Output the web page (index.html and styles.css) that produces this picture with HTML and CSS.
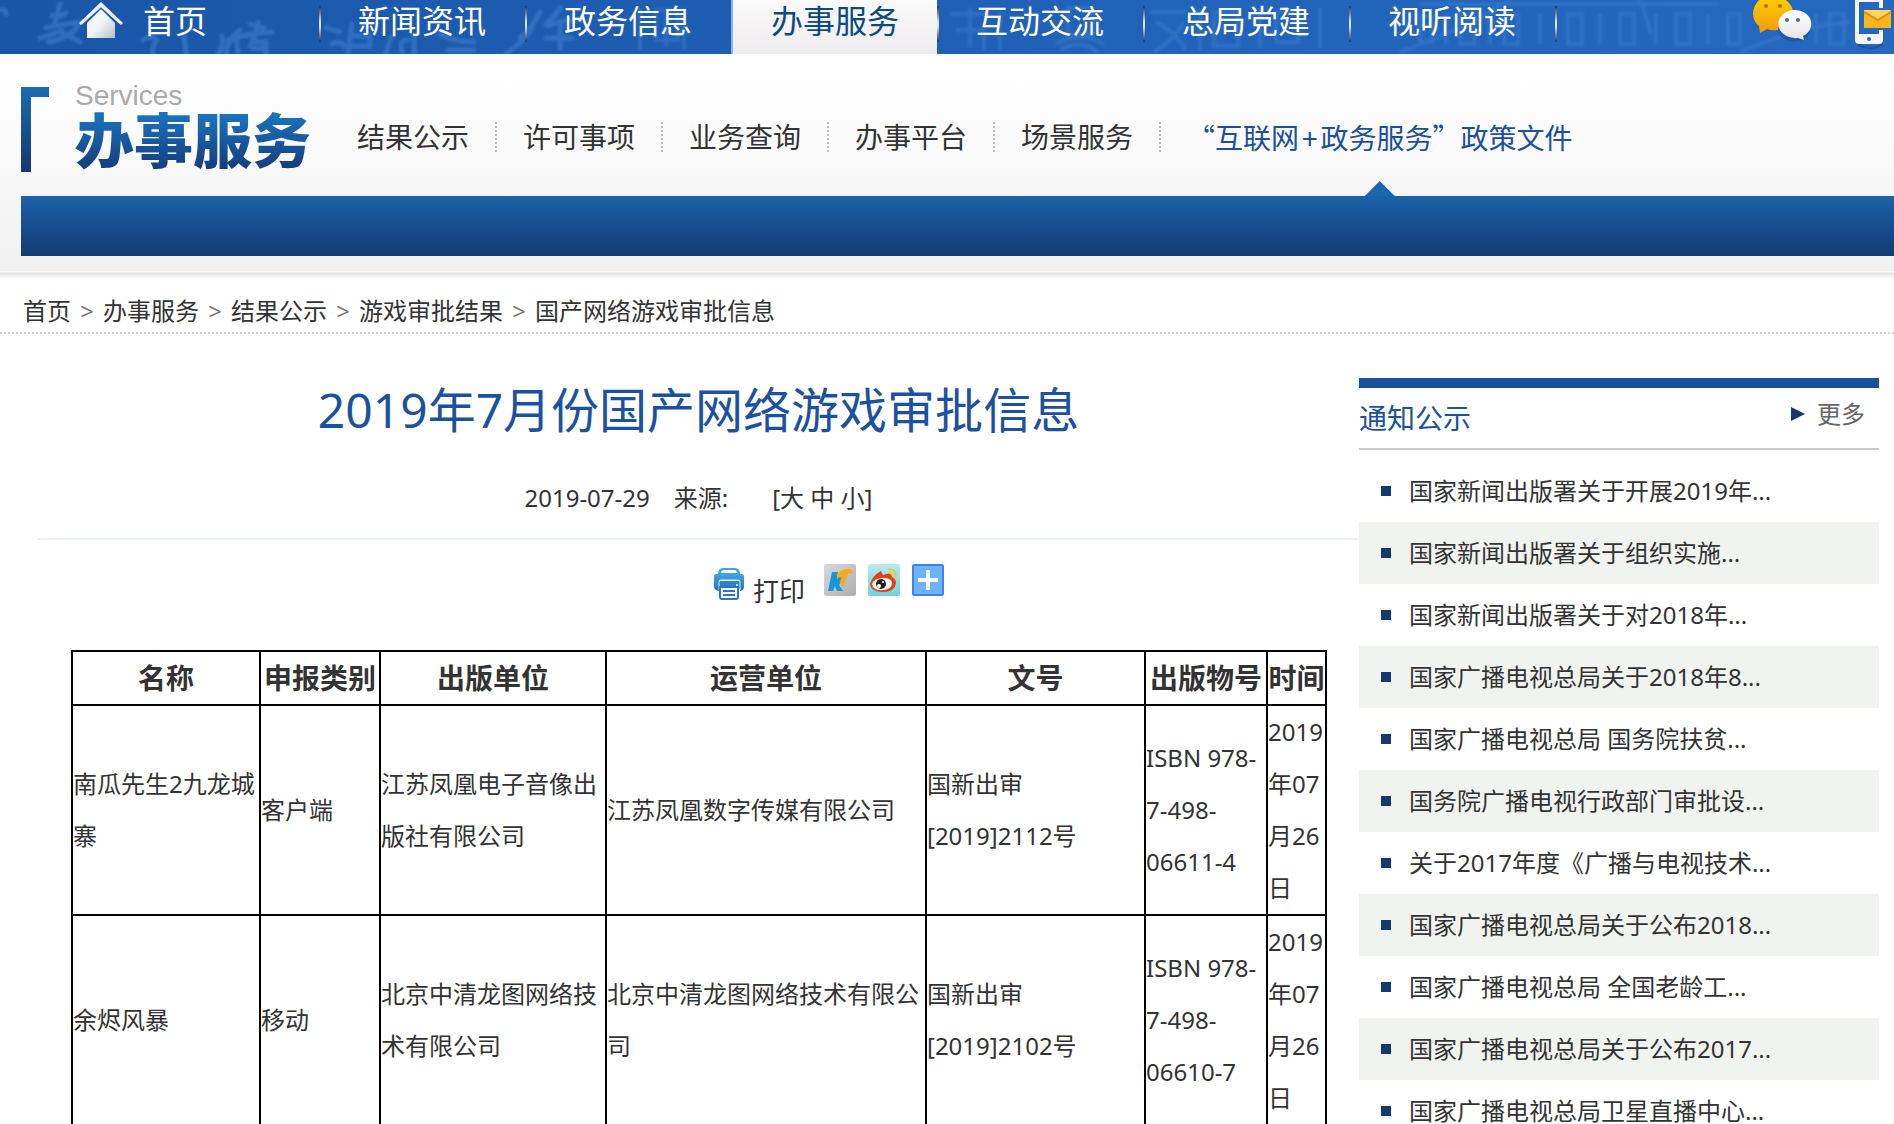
FILE: index.html
```html
<!DOCTYPE html>
<html lang="zh-CN">
<head>
<meta charset="utf-8">
<title>2019年7月份国产网络游戏审批信息</title>
<link rel="stylesheet" href="styles.css">
</head>
<body>
<nav class="mainnav">
  <svg class="mainnav-texture" width="1894" height="54" aria-hidden="true">
    <g class="brush">
      <path d="M0 10q6-2 6 4M40 38q12-3 22-8M52 15q8 3 14-2M60 4l-6 22M46 28q16-4 36-6M60 32q10 4 20 10M78 26q-8 12-30 16"/>
      <path d="M143 40q8-6 14 0q-6 8-4 14M184 36l2 18M222 36q2 10-4 18M240 30q-12 8-14 24M228 40l22-6M236 36l2 16M250 24l14 4M246 36q14-4 26-4M258 22q-2 14-8 24M252 42h14v12M252 48h12"/>
      <path d="M326 28l14 4M332 44q8-4 12 2M352 24l-4 28M352 36h18v10h-18M392 36q-4 8-6 18M408 40q-10 0-6 12M414 36v18M440 34q14 8 34 8M448 50h26"/>
      <path d="M540 12q-8 16-20 26M532 28q-6 12-26 26M560 8q-6 10-14 16M548 26q20-8 34-6M560 24v24M546 38h26"/>
    </g>
    <g class="seal">
      <path d="M640 8v42M656 10h22v30h-22zM684 8v42M666 14v32M760 10h24v34h-24zM772 6v42M950 14h40M970 8v40M956 30h28v20M1000 12v38M1056 44q22-14 48 0M1060 50q20-12 38 2M1068 8h24v26h-24zM1150 12h36M1156 22q20 10 30 28M1184 22q-12 20-30 30M1200 10v40M1214 12h24v34h-24z"/>
      <path d="M1260 8v40M1276 12h22v30h-22zM1320 8v40M1420 16h12v26h-12zM1446 14v30M1460 14h14v30h-14zM1490 14v30M1504 14h14v30h-14zM1540 14v30M1568 14h14v30h-14zM1600 14v30M1620 14h14v30h-14zM1656 14v30M1676 14h14v30h-14zM1708 14v30M1728 14h12v30h-12zM1816 14v30M1830 14h14v30h-14zM1420 4h300M1400 52q80-30 110-52M1740 52q60-26 110-30M1640 0q10 26 10 34"/>
    </g>
  </svg>
  <a class="home" href="#">
    <svg width="44" height="36" viewBox="0 0 44 36" aria-hidden="true">
      <defs><linearGradient id="roof" x1="0" y1="0" x2="1" y2="1"><stop offset="0" stop-color="#fff"/><stop offset=".5" stop-color="#f2f4f7"/><stop offset="1" stop-color="#b9bec6"/></linearGradient></defs>
      <path d="M8 21L22 7l14 14v15H8z" fill="url(#roof)"/>
      <path d="M22 5L3 22" stroke="#8fa9cf" stroke-width="1"/>
      <path d="M22 5l19 17" stroke="#8fa9cf" stroke-width="1"/>
      <path d="M22 0L0 21l2 2L22 5l20 18 2-2z" fill="#eef2f8"/>
    </svg>
    <span>首页</span>
  </a>
  <a class="tab" href="#">新闻资讯</a>
  <a class="tab" href="#">政务信息</a>
  <a class="tab tab-active" href="#">办事服务</a>
  <a class="tab" href="#">互动交流</a>
  <a class="tab" href="#">总局党建</a>
  <a class="tab" href="#">视听阅读</a>
  <div class="contact">
    <a href="#" aria-label="微信">
      <svg width="62" height="54" viewBox="0 0 62 54">
        <defs>
          <linearGradient id="gold" x1="0" y1="0" x2="0" y2="1"><stop offset="0" stop-color="#ffd000"/><stop offset="1" stop-color="#f59a0c"/></linearGradient>
          <linearGradient id="pearl" x1="0" y1="0" x2="0" y2="1"><stop offset="0" stop-color="#fff"/><stop offset="1" stop-color="#e4e4e6"/></linearGradient>
        </defs>
        <ellipse cx="42" cy="27" rx="17" ry="15" fill="#123f80" opacity=".4"/>
        <path d="M7 26C-1 20-1 8 7 0Q20-10 34 0Q41 6 41 12Q28 16 26 30Q20 31 15 29L8 33z" fill="url(#gold)"/>
        <path d="M41 10a17 14 0 1 0 5 28l6 2-1-4a17 14 0 0 0-10-26z" fill="url(#pearl)"/>
        <g fill="#a77a10"><circle cx="14" cy="6" r="2"/><circle cx="28" cy="6" r="2"/></g>
        <g fill="#3b6ca8"><circle cx="35" cy="20" r="2"/><circle cx="46" cy="20" r="2"/></g>
      </svg>
    </a>
    <a href="#" aria-label="手机客户端">
      <svg width="40" height="54" viewBox="0 0 40 54">
        <path d="M3 42q14 10 26 0v4q-13 6-26 0z" fill="#123f80" opacity=".4"/>
        <path d="M1 0h28v8h-4V2H5v32h20v-4h4v10q0 4-4 4H5q-4 0-4-4z" fill="#f5f6f8"/>
        <circle cx="15" cy="39" r="2" fill="#3b6ca8"/>
        <path d="M10 10h27v18H10z" fill="#fbb61b"/>
        <path d="M10 10h27L24 20z" fill="#ffd65a"/>
        <path d="M10 12l14 8 13-8" fill="none" stroke="#e58c12" stroke-width="2"/>
      </svg>
    </a>
  </div>
</nav>

<header class="section">
  <div class="section-top">
    <div class="brand">
      <svg width="28" height="86" viewBox="0 0 28 86" aria-hidden="true">
        <defs><linearGradient id="bracket" x1="0" y1="0" x2="0" y2="1"><stop offset="0" stop-color="#1b6ab4"/><stop offset="1" stop-color="#14376f"/></linearGradient></defs>
        <path d="M0 0h28v10H10v75H0z" fill="url(#bracket)"/>
      </svg>
      <div class="brand-name">
        <span class="brand-en">Services</span>
        <span class="brand-zh">办事服务</span>
      </div>
    </div>
    <ul class="subnav">
      <li><a href="#">结果公示</a></li>
      <li><a href="#">许可事项</a></li>
      <li><a href="#">业务查询</a></li>
      <li><a href="#">办事平台</a></li>
      <li><a href="#">场景服务</a></li>
      <li class="current"><a href="#">“互联网<span class="plus">+</span>政务服务”政策文件</a></li>
    </ul>
  </div>
  <div class="band"></div>
</header>

<ol class="crumbs">
  <li><a href="#">首页</a></li>
  <li><a href="#">办事服务</a></li>
  <li><a href="#">结果公示</a></li>
  <li><a href="#">游戏审批结果</a></li>
  <li><a href="#">国产网络游戏审批信息</a></li>
</ol>

<div class="columns">
  <main class="article">
    <h1>2019年7月份国产网络游戏审批信息</h1>
    <div class="meta">
      <span>2019-07-29</span>
      <span class="source">来源:</span>
      <span class="sizes">[<a href="#">大</a> <a href="#">中</a> <a href="#">小</a>]</span>
    </div>
    <div class="tools">
      <button class="print" type="button">
        <svg width="32" height="32" viewBox="0 0 32 32" aria-hidden="true">
          <defs><linearGradient id="ink" x1="0" y1="0" x2="0" y2="1"><stop offset="0" stop-color="#3fa6e0"/><stop offset="1" stop-color="#2a6fae"/></linearGradient></defs>
          <path d="M5 6q0-6 5-6h12q5 0 5 6z" fill="#3fa2dc"/>
          <path d="M8 5q0-3 3-3h10q3 0 3 3z" fill="#fff"/>
          <path d="M3 6h26q2 0 2 3v10q0 3-4 4v-9q0-2-2-2H8q-2 0-2 2v9q-5-1-5-4v-10q0-3 2-3z" fill="url(#ink)"/>
          <path d="M6 13h21v8H6z" fill="#2e83c3"/>
          <path d="M6 22v-8q0-2 2-2h17q2 0 2 2v8" fill="none" stroke="#d8effb"/>
          <circle cx="24" cy="17" r="1" fill="#fff"/>
          <path d="M6 18h20v11q0 3-3 3H9q-3 0-3-3z" fill="#2c78b6"/>
          <path d="M8 20h16v9q0 1-1 1H9q-1 0-1-1z" fill="#fff"/>
          <path d="M10 23h12M10 27h12" stroke="#2c78b6" stroke-width="2"/>
        </svg>
        <span>打印</span>
      </button>
      <a href="#" aria-label="人民微博">
        <svg width="32" height="32" viewBox="0 0 32 32">
          <defs><linearGradient id="steel" x1="0" y1="0" x2="1" y2="1"><stop offset="0" stop-color="#d9d9da"/><stop offset="1" stop-color="#adaeb0"/></linearGradient></defs>
          <rect width="32" height="32" rx="2" fill="url(#steel)"/>
          <path d="M8 8h6l-1 7 3-3 3 4-4 5 4 6h-6l-2-5-2 5H4z" fill="#1697dc"/>
          <path d="M13 10q6-6 14-5l2 4-5 1-5 14-3-5 1-6-4 1z" fill="#f9a91b"/>
        </svg>
      </a>
      <a href="#" aria-label="新浪微博">
        <svg width="32" height="32" viewBox="0 0 32 32">
          <defs><linearGradient id="aqua" x1="0" y1="0" x2="0" y2="1"><stop offset="0" stop-color="#b9ebf1"/><stop offset="1" stop-color="#72d2df"/></linearGradient></defs>
          <rect width="32" height="32" rx="2" fill="url(#aqua)"/>
          <path d="M2 20q2-8 11-13l2 4q9-4 9 2 4 2 4 6-1 9-13 9T2 20z" fill="#e93e12"/>
          <path d="M4 20q2-6 11-6t9 5q0 6-9 7-10 1-11-6z" fill="#fff"/>
          <circle cx="13" cy="20" r="5" fill="#222"/><circle cx="11" cy="22" r="2" fill="#fff"/><circle cx="15" cy="18" r="1" fill="#fff"/>
          <path d="M20 5q8-1 8 8M21 9q4 0 4 4" fill="none" stroke="#e0cf3c" stroke-width="2"/>
        </svg>
      </a>
      <a href="#" aria-label="更多分享">
        <svg width="32" height="32" viewBox="0 0 32 32">
          <rect x="1" y="1" width="30" height="30" rx="1" fill="#6fb1fd" stroke="#3c82f6" stroke-width="2"/>
          <path d="M16 6v20M6 16h20" stroke="#fff" stroke-width="4"/>
        </svg>
      </a>
    </div>
    <table class="approvals">
      <colgroup><col class="c-name"><col class="c-type"><col class="c-pub"><col class="c-op"><col class="c-doc"><col class="c-isbn"><col class="c-date"></colgroup>
      <thead>
        <tr><th>名称</th><th>申报类别</th><th>出版单位</th><th>运营单位</th><th>文号</th><th>出版物号</th><th>时间</th></tr>
      </thead>
      <tbody>
        <tr><td>南瓜先生2九龙城寨</td><td>客户端</td><td>江苏凤凰电子音像出版社有限公司</td><td>江苏凤凰数字传媒有限公司</td><td>国新出审[2019]2112号</td><td>ISBN 978-<wbr>7-498-<wbr>06611-4</td><td>2019年07月26日</td></tr>
        <tr><td>余烬风暴</td><td>移动</td><td>北京中清龙图网络技术有限公司</td><td>北京中清龙图网络技术有限公司</td><td>国新出审[2019]2102号</td><td>ISBN 978-<wbr>7-498-<wbr>06610-7</td><td>2019年07月26日</td></tr>
      </tbody>
    </table>
  </main>

  <aside class="notices">
    <div class="notices-head">
      <h2>通知公示</h2>
      <a class="more" href="#">更多</a>
    </div>
    <ul>
      <li><a href="#">国家新闻出版署关于开展2019年...</a></li>
      <li><a href="#">国家新闻出版署关于组织实施...</a></li>
      <li><a href="#">国家新闻出版署关于对2018年...</a></li>
      <li><a href="#">国家广播电视总局关于2018年8...</a></li>
      <li><a href="#">国家广播电视总局 国务院扶贫...</a></li>
      <li><a href="#">国务院广播电视行政部门审批设...</a></li>
      <li><a href="#">关于2017年度《广播与电视技术...</a></li>
      <li><a href="#">国家广播电视总局关于公布2018...</a></li>
      <li><a href="#">国家广播电视总局 全国老龄工...</a></li>
      <li><a href="#">国家广播电视总局关于公布2017...</a></li>
      <li><a href="#">国家广播电视总局卫星直播中心...</a></li>
    </ul>
  </aside>
</div>
</body>
</html>
```
FILE: styles.css
```css
* { box-sizing: border-box; }

body {
  margin: 0;
  background: #fff;
  color: #333;
  font: 24px/52px "Noto Sans", "Noto Sans CJK SC", sans-serif;
}

a { color: inherit; text-decoration: none; }
ul, ol { margin: 0; padding: 0; list-style: none; }
svg { display: block; }

/* top navigation */
.mainnav {
  position: relative;
  display: flex;
  height: 54px;
  overflow: hidden;
  background: linear-gradient(90deg, #1a56a6, #1d5cb0 30%, #2163b9 60%, #2568bf);
  color: #fff;
  font-size: 32px;
  line-height: 42px;
}
.mainnav-texture { position: absolute; inset: 0; fill: none; }
.brush { stroke: #3f7ecd; stroke-width: 5; stroke-linecap: round; opacity: .6; filter: blur(1px); }
.seal { stroke: #3a7dcf; stroke-width: 4; opacity: .5; filter: blur(1px); }
.home, .tab, .contact { position: relative; flex: none; }
.home {
  display: flex;
  gap: 20px;
  width: 319px;
  padding: 0 0 0 79px;
}
.home svg { margin-top: 2px; }
.tab {
  width: 206px;
  text-align: center;
}
.tab, .contact {
  background: linear-gradient(#1c3558, #dfeaf8 45%, #dfeaf8 55%, #1c3558) no-repeat 0 6px / 2px 36px;
}
.tab-active {
  border-left: 2px solid #8fb4e0;
  background: linear-gradient(#fbfafa, #eeecee) padding-box;
  color: #0d4a80;
}
.contact {
  display: flex;
  flex: 1 0 auto;
  justify-content: flex-end;
  gap: 40px;
}

/* section header */
.section {
  height: 225px;
  padding-left: 21px;
  background:
    linear-gradient(#fff, #e4e4e4 30%, #fff) no-repeat 0 100% / 100% 8px,
    linear-gradient(#fff 10%, #f0f0f0);
}
.section-top {
  display: flex;
  align-items: flex-start;
  height: 142px;
}
.brand { display: flex; gap: 26px; width: 310px; padding-top: 33px; }
.brand-name { display: flex; flex-direction: column; gap: 3px; }
.brand-en {
  color: #aaa;
  font: 28px/18px "Liberation Sans", Arial, sans-serif;
}
.brand-zh {
  background: linear-gradient(#1b72be 10%, #153b78 90%);
  background-clip: text;
  color: transparent;
  font-family: "Liberation Sans", "Noto Sans CJK SC", sans-serif;
  font-size: 59px;
  font-weight: 900;
  line-height: 70px;
}
.subnav {
  display: flex;
  padding-top: 68px;
  font-size: 28px;
  line-height: 30px;
  white-space: nowrap;
}
.subnav li {
  width: 166px;
  height: 30px;
  padding-left: 26px;
  border-right: 2px dotted #bbb;
}
.subnav .current {
  position: relative;
  width: auto;
  margin-left: 26px;
  padding: 0;
  border: 0;
  color: #1c4f9c;
  font-family: "Noto Sans CJK SC", sans-serif;
}
.plus { padding: 0 3px; }
.current::after {
  content: "";
  position: absolute;
  left: 50%;
  bottom: -44px;
  width: 30px;
  height: 15px;
  margin-left: -15px;
  background: #1b66af;
  clip-path: polygon(50% 0, 100% 100%, 0 100%);
}
.band { height: 60px; background: linear-gradient(#1a62aa, #15417f 80%, #143c74); }

/* breadcrumb */
.crumbs {
  display: flex;
  height: 55px;
  padding: 6px 23px 0;
  border-bottom: 2px dotted #d4d4d4;
}
.crumbs li + li::before { content: ">"; display: inline-block; width: 32px; color: #777; text-align: center; }

/* content */
.columns {
  display: flex;
  align-items: flex-start;
  padding: 44px 15px 0 38px;
}
.article { flex: 1; min-width: 0; }
.article h1 {
  margin: 0;
  color: #1c51a0;
  font-size: 48px;
  font-weight: 400;
  line-height: 64px;
  text-align: center;
}
.meta {
  display: flex;
  justify-content: center;
  height: 98px;
  margin-bottom: 24px;
  padding-top: 30px;
  border-bottom: 2px solid #eaf1f6;
}
.source { padding: 0 44px 0 24px; }
.tools {
  display: flex;
  justify-content: center;
  gap: 12px;
  height: 86px;
  padding-left: 260px;
}
.print {
  display: flex;
  gap: 8px;
  height: 52px;
  margin-right: 7px;
  padding: 4px 0 0;
  border: 0;
  background: none;
  color: #333;
  font: inherit;
  font-size: 26px;
  line-height: 46px;
}
.approvals {
  width: calc(100% - 65px);
  margin-left: 33px;
  border-collapse: collapse;
  table-layout: fixed;
}
.approvals th, .approvals td { padding: 0; border: 2px solid #000; }
.approvals th { font-size: 28px; white-space: nowrap; }
.c-name { width: 188px; }
.c-type { width: 120px; }
.c-pub { width: 226px; }
.c-op { width: 320px; }
.c-doc { width: 219px; }
.c-isbn { width: 122px; }
.c-date { width: 59px; }

/* notices */
.notices { width: 520px; border-top: 10px solid #1b509c; }
.notices-head {
  display: flex;
  justify-content: space-between;
  height: 62px;
  margin-bottom: 10px;
  padding-right: 14px;
  border-bottom: 2px solid #ccc;
}
.notices h2 {
  margin: 0;
  color: #1c51a0;
  font-size: 28px;
  font-weight: 400;
  line-height: 60px;
}
.more { display: flex; align-items: center; gap: 12px; height: 52px; color: #666; }
.more::before {
  content: "";
  width: 14px;
  height: 14px;
  background: #14396f;
  clip-path: polygon(0 0, 100% 50%, 0 100%);
}
.notices li {
  display: flex;
  align-items: center;
  gap: 18px;
  height: 62px;
  padding-left: 22px;
  white-space: nowrap;
}
.notices li:nth-child(even) { background: #f1f3f1; }
.notices li::before { content: ""; width: 10px; height: 10px; background: #14396f; }
```
